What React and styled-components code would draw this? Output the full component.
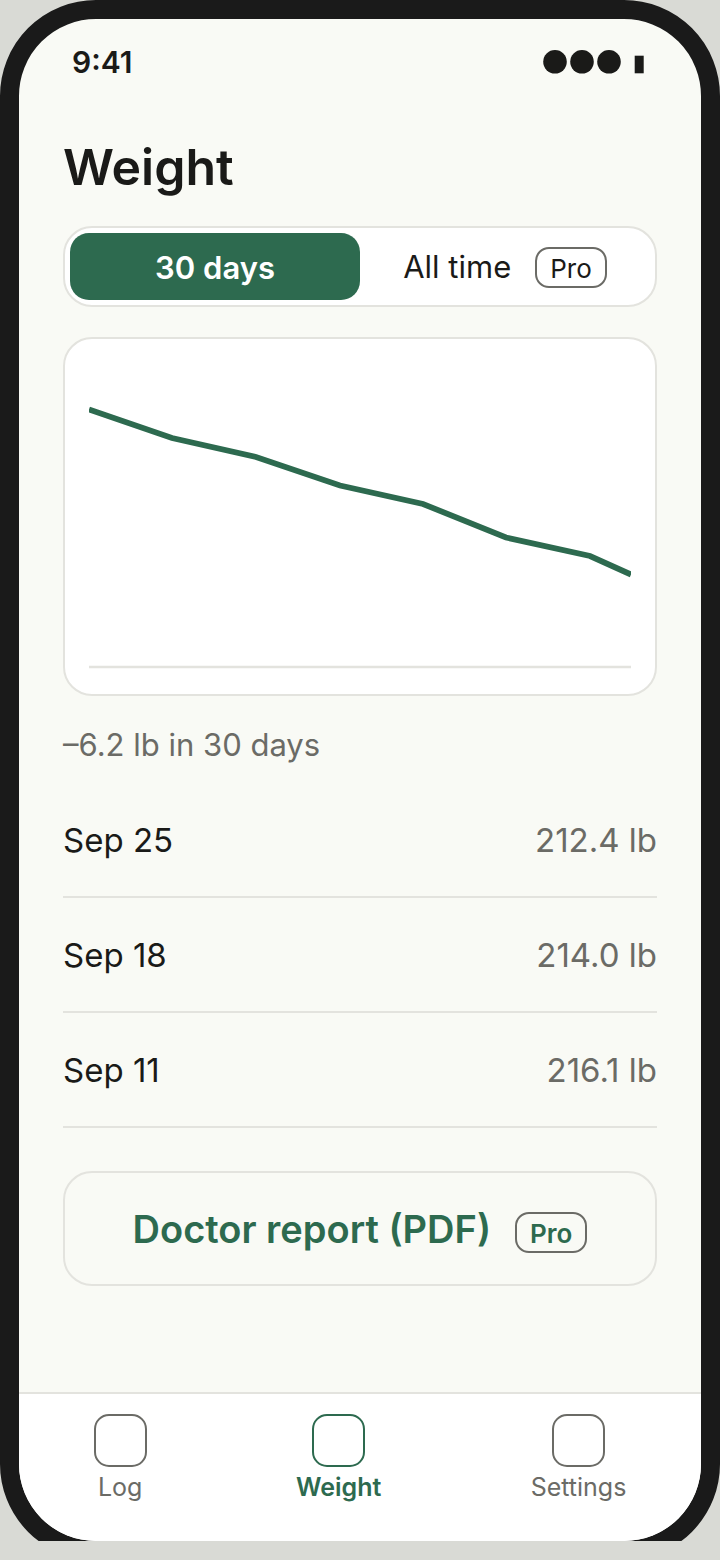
import React, { useState } from 'react'
import styled, { createGlobalStyle } from 'styled-components'

const GlobalStyle = createGlobalStyle`
  * {
    box-sizing: border-box;
  }

  body {
    margin: 0;
    background-color: #d9dad5;
    color: #1a1a18;
    font-family: Inter, "Liberation Sans", sans-serif;
  }

  button {
    font: inherit;
    color: inherit;
    cursor: pointer;
  }
`

const Stage = styled.div`
  min-height: 100vh;
  padding-bottom: 19px;
  overflow: hidden;
`

// the lower edge of the bezel is cut off by the stage
const Crop = styled.div`
  overflow: hidden;
`

const Phone = styled.div`
  display: flex;
  flex-direction: column;
  min-height: 100vh;
  margin-bottom: -19px;
  border: 19px solid #1a1a1a;
  border-radius: 96px;
  background-color: #f9faf5;
  overflow: hidden;
`

const StatusBar = styled.header`
  display: flex;
  align-items: center;
  justify-content: space-between;
  padding: 25px 53px;
  font-size: 30px;
  font-weight: 600;
  line-height: 36px;
`

const Main = styled.main`
  flex: 1;
  display: flex;
  flex-direction: column;
  padding: 30px 44px 44px;
`

const Title = styled.h1`
  margin: 0 0 27px;
  font-size: 50px;
  font-weight: 600;
  line-height: 64px;
`

const Segments = styled.div`
  display: grid;
  grid-template-columns: 1fr 1fr;
  padding: 5px;
  border: 2px solid #e3e3de;
  border-radius: 29px;
  background-color: #fff;
`

const Segment = styled.button`
  height: 67px;
  padding: 2px 0 0;
  border: 0;
  border-radius: 19px;
  font-size: 31px;
  font-weight: ${props => props.$active ? 600 : 400};
  background-color: ${props => props.$active ? '#2d6a4f' : 'transparent'};
  color: ${props => props.$active ? '#fff' : '#1a1a18'};
`

const Badge = styled.span`
  display: inline-block;
  margin-left: 24px;
  padding: 3px 13px 1px;
  border: 2px solid #6b6b66;
  border-radius: 14px;
  font-size: 26px;
  line-height: 33px;
`

const ChartCard = styled.section`
  margin-top: 30px;
  padding: 24px;
  border: 2px solid #e3e3de;
  border-radius: 29px;
  background-color: #fff;

  svg {
    display: block;
    width: 100%;
    height: auto;
  }
`

const Summary = styled.p`
  margin: 29px 0 18px;
  color: #6b6b66;
  font-size: 31px;
  line-height: 40px;
`

const Entries = styled.table`
  width: 100%;
  border-collapse: separate;
  border-spacing: 0;
  font-size: 33px;
  line-height: 41px;

  th, td {
    padding: 37px 0 35px;
    border-bottom: 2px solid #e3e3de;
    font-weight: 400;
    text-align: left;
  }

  td {
    color: #6b6b66;
    text-align: right;
  }
`

const ReportButton = styled.button`
  height: 115px;
  margin-top: 43px;
  padding: 2px 0 0;
  border: 2px solid #e3e3de;
  border-radius: 29px;
  background-color: transparent;

  && {
    color: #2d6a4f;
    font-size: 38px;
    font-weight: 600;
  }
`

const TabBar = styled.nav`
  display: flex;
  justify-content: space-around;
  padding: 20px 0 39px;
  border-top: 2px solid #e3e3de;
  background-color: #fff;
`

const Tab = styled.a`
  display: flex;
  flex-direction: column;
  align-items: center;
  gap: 5px;
  color: ${props => props.$active ? '#2d6a4f' : '#6b6b66'};
  font-size: 25px;
  font-weight: ${props => props.$active ? 600 : 400};
  line-height: 30px;
  text-decoration: none;
`

const TabIcon = styled.span`
  width: 53px;
  height: 53px;
  border: 2px solid currentColor;
  border-radius: 15px;
`

const entries = [
  { date: 'Sep 25', weight: '212.4 lb' },
  { date: 'Sep 18', weight: '214.0 lb' },
  { date: 'Sep 11', weight: '216.1 lb' }
]

const tabs = ['Log', 'Weight', 'Settings']

function Signal () {
  return (
    <svg width='109' height='24' viewBox='0 0 109 24' fill='currentColor' role='img' aria-label='Signal and battery'>
      <circle cx='16' cy='11.8' r='11.8' />
      <circle cx='43' cy='11.8' r='11.8' />
      <circle cx='70' cy='11.8' r='11.8' />
      <rect x='95.7' y='5.7' width='9' height='17.6' />
    </svg>
  )
}

function WeightChart () {
  return (
    <svg viewBox='0 0 542 307' fill='none' role='img' aria-label='Weight over the last 30 days'>
      <path d='M0 304H542' stroke='#e3e3de' strokeWidth='2.4' />
      <polyline
        points='0,46.5 83,75 167,94 251,122.5 334,141 417,174.5 501,193 542,211.5'
        stroke='#2d6a4f'
        strokeWidth='5.8'
      />
    </svg>
  )
}

export default function App () {
  const [range, setRange] = useState('30')

  return (
    <Stage>
      <GlobalStyle />
      <Crop>
        <Phone>
          <StatusBar>
            <span>9:41</span>
            <Signal />
          </StatusBar>
          <Main>
            <Title>Weight</Title>
            <Segments>
              <Segment $active={range === '30'} aria-pressed={range === '30'} onClick={() => setRange('30')}>
                30 days
              </Segment>
              <Segment $active={range === 'all'} aria-pressed={range === 'all'} onClick={() => setRange('all')}>
                All time
                <Badge>Pro</Badge>
              </Segment>
            </Segments>
            <ChartCard>
              <WeightChart />
            </ChartCard>
            <Summary>–6.2 lb in 30 days</Summary>
            <Entries>
              <tbody>
                {entries.map(({ date, weight }) => (
                  <tr key={date}>
                    <th scope='row'>{date}</th>
                    <td>{weight}</td>
                  </tr>
                ))}
              </tbody>
            </Entries>
            <ReportButton>
              Doctor report (PDF)
              <Badge>Pro</Badge>
            </ReportButton>
          </Main>
          <TabBar>
            {tabs.map(tab => (
              <Tab
                key={tab}
                href={`#${tab.toLowerCase()}`}
                $active={tab === 'Weight'}
                aria-current={tab === 'Weight' ? 'page' : undefined}
              >
                <TabIcon />
                {tab}
              </Tab>
            ))}
          </TabBar>
        </Phone>
      </Crop>
    </Stage>
  )
}
